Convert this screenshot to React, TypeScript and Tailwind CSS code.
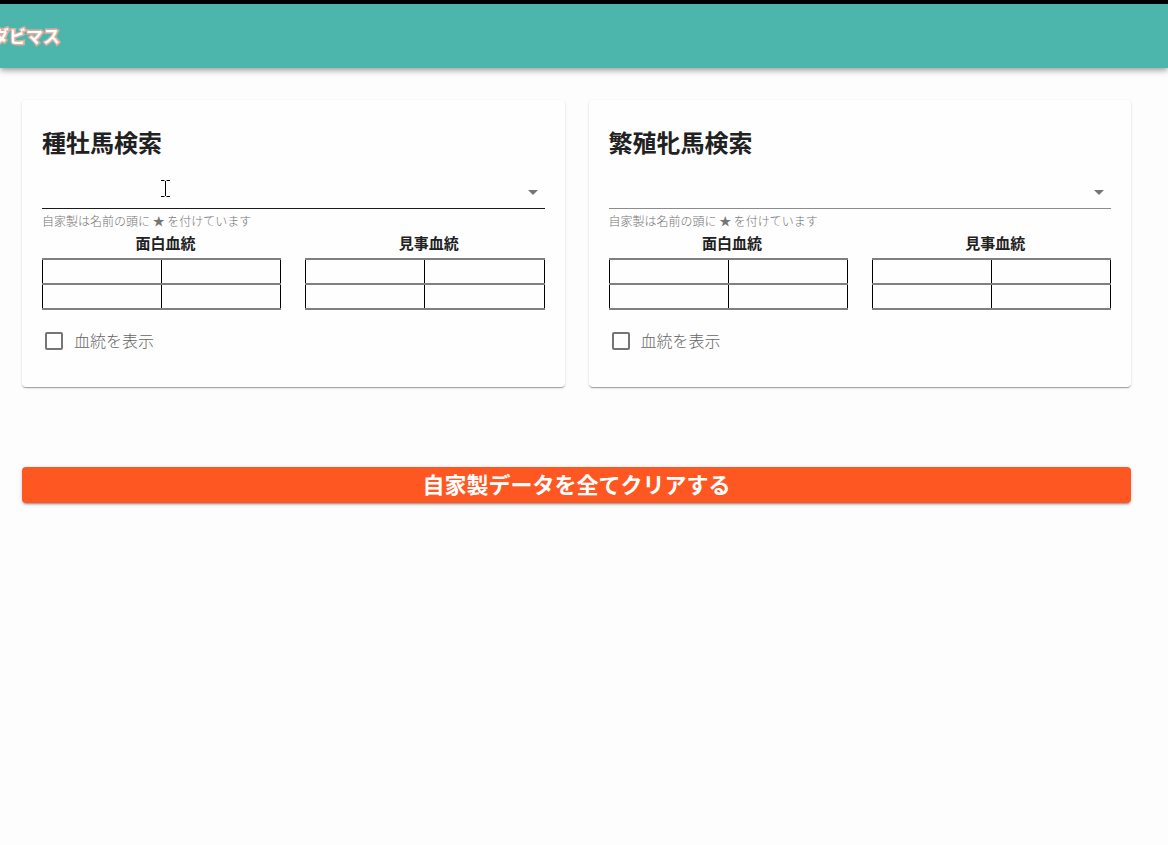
import { useId, useState } from "react";

const CARD_SHADOW =
  "shadow-[0_2px_1px_-1px_rgba(0,0,0,0.2),0_1px_1px_0_rgba(0,0,0,0.14),0_1px_3px_0_rgba(0,0,0,0.12)]";

function PedigreeTable({ title }: { title: string }) {
  const cell = "border-x border-y-2 border-x-black border-y-[#808080] p-0";
  return (
    <table className="h-[52px] w-full table-fixed border-collapse">
      <caption className="pt-1 pb-[5px] pl-2 text-[15px] leading-5 font-bold text-[#212121]">{title}</caption>
      <tbody>
        {[0, 1].map((row) => (
          <tr key={row} className="h-[25px]">
            <td className={cell} />
            <td className={cell} />
          </tr>
        ))}
      </tbody>
    </table>
  );
}

function TextCursor() {
  return (
    <svg
      className="pointer-events-none absolute top-0 left-[118px] h-[18px] w-[11px]"
      viewBox="0 0 11 18"
      fill="none"
      stroke="#000"
      aria-hidden="true"
    >
      <path d="M1 .5h3.5M6.5 .5H10M1 16.5h3.5M6.5 16.5H10" />
      <path d="M5.5 1v15" />
    </svg>
  );
}

function SearchCard({ title, hovered = false }: { title: string; hovered?: boolean }) {
  const id = useId();
  const [shown, setShown] = useState(false);
  return (
    <section className={`min-w-0 flex-1 rounded bg-[#fefefe] px-5 pt-6 pb-[34px] ${CARD_SHADOW}`}>
      <h2 className="text-2xl leading-9 font-bold text-[#212121]">{title}</h2>
      <div className="relative mt-5">
        <select
          aria-label={title}
          aria-describedby={`${id}-help`}
          className={`block h-[29px] w-full appearance-none border-b bg-transparent pr-8 outline-none ${
            hovered ? "border-[#1b1b1b]" : "border-[#8c8c8c]"
          }`}
        >
          <option value="" />
        </select>
        <svg
          className="pointer-events-none absolute top-0 right-0 size-6 fill-[#757575]"
          viewBox="0 0 24 24"
          aria-hidden="true"
        >
          <path d="M7 10l5 5 5-5z" />
        </svg>
        {hovered && <TextCursor />}
      </div>
      <p id={`${id}-help`} className="mt-1 text-xs leading-4 font-light text-[#757575]">
        自家製は名前の頭に ★ を付けています
      </p>
      <div className="grid grid-cols-2 gap-6">
        <PedigreeTable title="面白血統" />
        <PedigreeTable title="見事血統" />
      </div>
      <div className="mt-[19px] flex h-6 items-center gap-[11px] pl-[3px]">
        <input
          id={`${id}-show`}
          type="checkbox"
          checked={shown}
          onChange={(e) => setShown(e.target.checked)}
          className="size-[18px] appearance-none rounded-xs border-2 border-[#757575] checked:bg-[#757575]"
        />
        <label htmlFor={`${id}-show`} className="pb-0.5 text-base leading-6 font-light text-[#666]">
          血統を表示
        </label>
      </div>
    </section>
  );
}

export default function App() {
  return (
    <div
      lang="ja"
      className="min-h-screen overflow-x-hidden bg-[#fdfdfd] font-['Noto_Sans_CJK_JP',sans-serif]"
    >
      <div className="h-1 bg-black" />
      <header className="flex h-16 items-center bg-[#4db6ac] shadow-[0_2px_4px_-1px_rgba(0,0,0,0.2),0_4px_5px_0_rgba(0,0,0,0.14),0_1px_10px_0_rgba(0,0,0,0.12)]">
        <h1 className="-ml-2 text-[17px] leading-6 font-bold text-white [paint-order:stroke_fill] [-webkit-text-stroke:3px_#d9ada0]">
          ダビマス
        </h1>
      </header>
      <main className="pt-8 pr-[37px] pl-[22px]">
        <div className="flex gap-6">
          <SearchCard title="種牡馬検索" hovered />
          <SearchCard title="繁殖牝馬検索" />
        </div>
        <button
          type="button"
          className="mt-20 flex h-9 w-full items-center justify-center rounded bg-[#ff5722] pb-1 text-[22px] leading-8 font-bold text-white shadow-[0_3px_1px_-2px_rgba(0,0,0,0.2),0_2px_2px_0_rgba(0,0,0,0.14),0_1px_5px_0_rgba(0,0,0,0.12)]"
        >
          自家製データを全てクリアする
        </button>
      </main>
    </div>
  );
}
